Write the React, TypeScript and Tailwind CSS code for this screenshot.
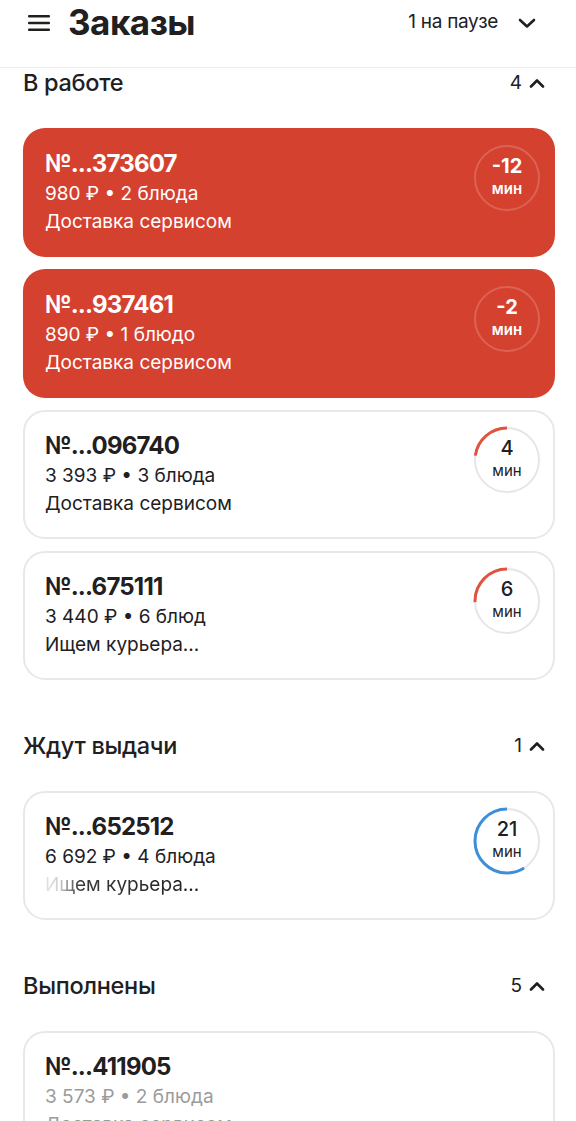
import React from "react";

type Tone = "late" | "normal" | "done";

interface Order {
  id: string;
  price: string;
  dishes: string;
  status: string;
  minutes?: string;
  arc?: number; // degrees, counterclockwise from top
  arcColor?: string;
  fadeStatus?: boolean;
  tone: Tone;
}

const sections: { title: string; count: number; orders: Order[] }[] = [
  {
    title: "В работе",
    count: 4,
    orders: [
      { id: "373607", price: "980 ₽", dishes: "2 блюда", status: "Доставка сервисом", minutes: "-12", tone: "late" },
      { id: "937461", price: "890 ₽", dishes: "1 блюдо", status: "Доставка сервисом", minutes: "-2", tone: "late" },
      { id: "096740", price: "3 393 ₽", dishes: "3 блюда", status: "Доставка сервисом", minutes: "4", arc: 82, arcColor: "#e0533f", tone: "normal" },
      { id: "675111", price: "3 440 ₽", dishes: "6 блюд", status: "Ищем курьера...", minutes: "6", arc: 92, arcColor: "#e0533f", tone: "normal" },
    ],
  },
  {
    title: "Ждут выдачи",
    count: 1,
    orders: [
      { id: "652512", price: "6 692 ₽", dishes: "4 блюда", status: "Ищем курьера...", minutes: "21", arc: 212, arcColor: "#3d8fda", fadeStatus: true, tone: "normal" },
    ],
  },
  {
    title: "Выполнены",
    count: 5,
    orders: [
      { id: "411905", price: "3 573 ₽", dishes: "2 блюда", status: "Доставка сервисом", tone: "done" },
    ],
  },
];

const Ring: React.FC<{ value: string; late: boolean; arc?: number; color?: string }> = ({ value, late, arc, color }) => {
  const r = 32;
  const c = 2 * Math.PI * r;
  return (
    <div className="relative w-[68px] h-[68px] shrink-0">
      <svg width="68" height="68" viewBox="0 0 68 68" className="absolute inset-0">
        <circle cx="34" cy="34" r={r} fill="none" stroke={late ? "rgba(255,255,255,0.18)" : "#e6e6e6"} strokeWidth="2" />
        {arc !== undefined && (
          <circle
            cx="34"
            cy="34"
            r={r}
            fill="none"
            stroke={color}
            strokeWidth="3"
            strokeDasharray={`${(arc / 360) * c} ${c}`}
            transform="translate(68 0) scale(-1 1) rotate(-90 34 34)"
          />
        )}
      </svg>
      <div className={`relative flex flex-col items-center pt-[12px] leading-none ${late ? "text-white" : "text-[#21201f]"}`}>
        <span className={`text-[20px] ${late ? "font-bold" : "font-medium"}`}>{value}</span>
        <span className={`text-[15px] mt-[5px] ${late ? "font-semibold" : ""}`}>мин</span>
      </div>
    </div>
  );
};

const OrderCard: React.FC<{ order: Order }> = ({ order }) => {
  const late = order.tone === "late";
  const done = order.tone === "done";
  return (
    <div
      className={`h-[129px] rounded-[22px] flex justify-between ${
        late ? "bg-[#d5412f] text-white" : "bg-white border-2 border-[#e8e8e8] text-[#21201f]"
      }`}
    >
      <div className={`${late ? "pl-[22px] pt-[20px]" : "pl-[20px] pt-[18px]"} flex flex-col`}>
        <span className="text-[24px] font-bold leading-[32px] tracking-[-0.8px]">№...{order.id}</span>
        <span className={`text-[19px] leading-[28px] ${done ? "text-[#9b9b9b]" : ""}`}>
          {order.price} • {order.dishes}
        </span>
        {order.fadeStatus ? (
          <span className="text-[19px] leading-[28px] self-start text-transparent bg-clip-text bg-[linear-gradient(90deg,#e4e4e4_0px,#d0d0d0_14px,#3a3a3a_34px,#21201f_100%)]">
            {order.status}
          </span>
        ) : (
          <span className={`text-[19px] leading-[28px] ${done ? "text-[#9b9b9b]" : ""}`}>{order.status}</span>
        )}
      </div>
      {order.minutes && (
        <div className={late ? "pt-[16px] pr-[14px]" : "pt-[14px] pr-[12px]"}>
          <Ring value={order.minutes} late={late} arc={order.arc} color={order.arcColor} />
        </div>
      )}
    </div>
  );
};

const ChevronUp = () => (
  <svg width="16" height="10" viewBox="0 0 16 10" fill="none">
    <path d="M2 8.5 L8 2.5 L14 8.5" stroke="#21201f" strokeWidth="2.6" strokeLinecap="round" strokeLinejoin="round" />
  </svg>
);

export default function App() {
  return (
    <div className="w-[576px] h-[1121px] overflow-hidden bg-white font-['Inter',sans-serif] text-[#21201f]">
      {/* App bar */}
      <div className="h-[68px] border-b border-[#ececec] flex items-center pl-[28px] pr-[40px] pb-[22px]">
        <svg width="22" height="18" viewBox="0 0 22 18" className="shrink-0">
          <rect x="0" y="1" width="22" height="2.6" rx="1" fill="#21201f" />
          <rect x="0" y="7.7" width="22" height="2.6" rx="1" fill="#21201f" />
          <rect x="0" y="14.4" width="22" height="2.6" rx="1" fill="#21201f" />
        </svg>
        <h1 className="ml-[18px] text-[35px] font-bold tracking-[-0.5px] leading-none">Заказы</h1>
        <div className="ml-auto flex items-center">
          <span className="text-[19px] tracking-[-0.3px]">1 на паузе</span>
          <svg width="18" height="12" viewBox="0 0 18 12" className="ml-[20px]">
            <path d="M2 3 L9 9.5 L16 3" stroke="#21201f" strokeWidth="2.6" fill="none" strokeLinecap="round" strokeLinejoin="round" />
          </svg>
        </div>
      </div>

      <div className="pl-[23px] pr-[21px]">
        {sections.map((s, i) => (
          <div key={s.title} className={i === 0 ? "" : "mt-[51px]"}>
            <div className="h-[30px] flex items-center justify-between">
              <span className="text-[23.5px] font-medium tracking-[-0.3px]">{s.title}</span>
              <div className="flex items-center gap-[7px] pr-[10px]">
                <span className="text-[19px]">{s.count}</span>
                <ChevronUp />
              </div>
            </div>
            <div className="mt-[30px] flex flex-col gap-[12px]">
              {s.orders.map((o) => (
                <OrderCard key={o.id} order={o} />
              ))}
            </div>
          </div>
        ))}
      </div>
    </div>
  );
}
